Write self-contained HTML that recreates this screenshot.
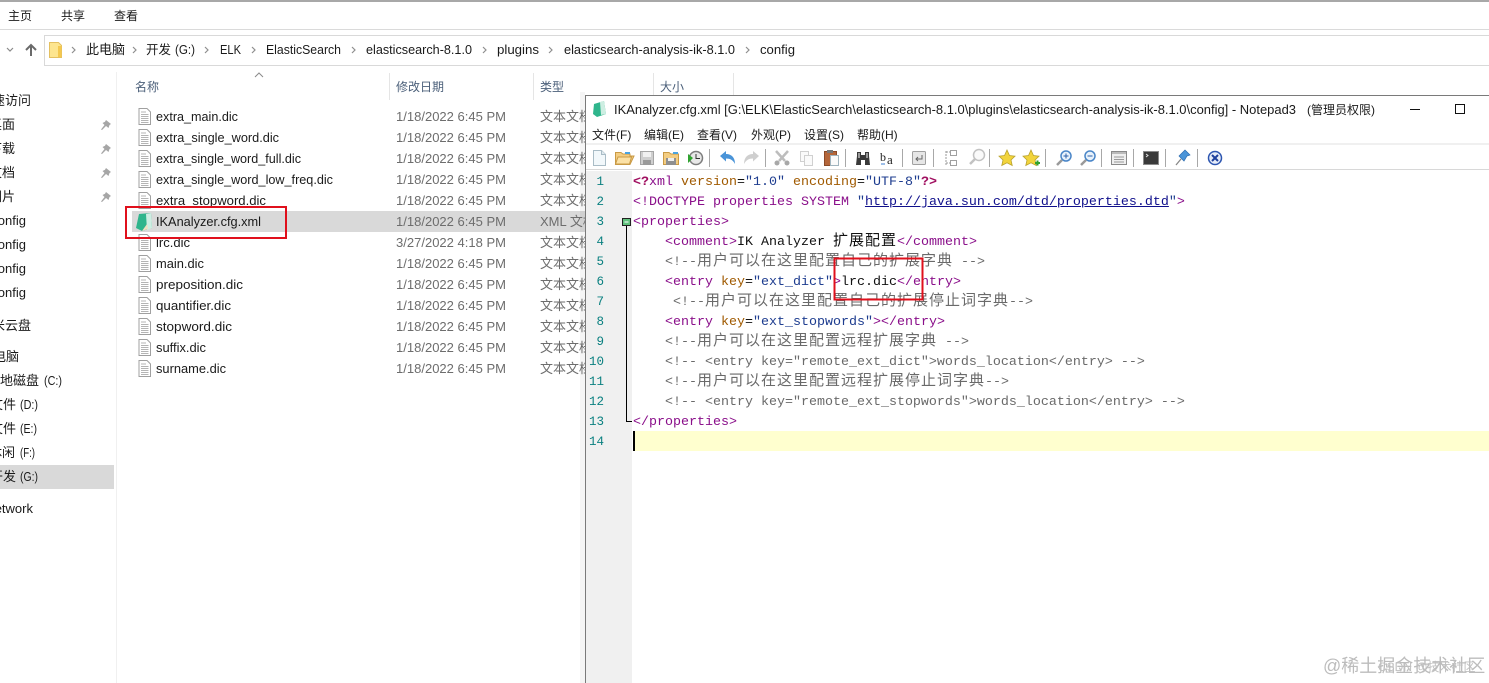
<!DOCTYPE html>
<html lang="zh">
<head>
<meta charset="utf-8">
<title>IKAnalyzer.cfg.xml</title>
<style>
html,body{margin:0;padding:0;width:1489px;height:683px;overflow:hidden;background:#fff}
svg{position:absolute;left:0;top:0}
svg text{font-family:"Liberation Sans","Noto Sans CJK SC",sans-serif;font-size:13px;fill:#1a1a1a}
.d{fill:#6d6d6d}
.h{fill:#4c607a;font-size:12px}
.c{font-size:12px}
#code{position:absolute;left:633px;top:173px;margin:0;font-family:"Liberation Mono",monospace;font-size:13.33px;line-height:20px;color:#111;white-space:pre;z-index:3}
#code div{height:20px;line-height:20px}
#code i{font-family:"Noto Sans CJK SC",sans-serif;font-style:normal;font-size:15px;letter-spacing:1px;line-height:0}
.t{color:#8a0f8a}.k{color:#a05a00}.s{color:#1d3c8f}.m{color:#6a6a6a}.p{color:#a00f60;font-weight:bold}
.u{color:#10108c;text-decoration:underline}
#nums{position:absolute;left:586px;top:172px;width:18px;text-align:right;font-family:"Liberation Mono",monospace;font-size:12.5px;line-height:20px;color:#0a8080;z-index:3}
#nums div{height:20px}
#over{z-index:4}
</style>
</head>
<body>
<svg width="1489" height="683" viewBox="0 0 1489 683" style="z-index:1">
<defs>
<g id="f">
<path d="M1 .5H9L12.5 4V16.5H1Z" fill="#fff" stroke="#a0a0a0"/>
<path d="M3 4H8M3 6.5H10.500M3 8.500H10.500M3 10.500H10.500M3 12.500H10.500M3 14.500H10.500" stroke="#b4b4b4"/>
</g>
<path id="pin" d="M5 0 10 4 8.500 5 7.500 8 5 6 1 10 0 9.500 3.500 5 1.500 3 4 1.800Z" fill="#a6a6a6"/>
</defs>
<rect x="0" y="0" width="1489" height="2" fill="#a8a8a8"/>
<rect x="0" y="29" width="1489" height="1" fill="#dadada"/>
<text class="c" x="8" y="20">主页</text><text class="c" x="61" y="20">共享</text><text class="c" x="114" y="20">查看</text>

<path d="M7 48 10 51 13 48" fill="none" stroke="#8a8a8a" stroke-width="1.200"/>
<path d="M31 56V45M26 50 31 45 36 50" fill="none" stroke="#6a6a6a" stroke-width="2"/>
<rect x="44.500" y="35.500" width="1450" height="30" fill="#fff" stroke="#d9d9d9"/>
<path d="M49.500 42.500H58.500L61.500 45.500V57.500H49.500Z" fill="#fde58f" stroke="#e4c060"/>
<path d="M58 46H61.500V57H58Z" fill="#f4c84f"/>
<g fill="none" stroke="#8f8f8f" stroke-width="1.200">
<path d="M72 47 75 50 72 53M133 47 136 50 133 53M205 47 208 50 205 53M252 47 255 50 252 53M352 47 355 50 352 53M483 47 486 50 483 53M549 47 552 50 549 53M746 47 749 50 746 53"/>
</g>
<text x="86" y="54">此电脑</text>
<text x="146" y="54" style="font-size:12.500px">开发</text><text x="175" y="54" textLength="20" lengthAdjust="spacingAndGlyphs">(G:)</text>
<text x="220" y="54" textLength="21" lengthAdjust="spacingAndGlyphs">ELK</text>
<text x="266" y="54" textLength="75" lengthAdjust="spacingAndGlyphs">ElasticSearch</text>
<text x="366" y="54" textLength="106" lengthAdjust="spacingAndGlyphs">elasticsearch-8.1.0</text>
<text x="497" y="54" textLength="42" lengthAdjust="spacingAndGlyphs">plugins</text>
<text x="564" y="54" textLength="171" lengthAdjust="spacingAndGlyphs">elasticsearch-analysis-ik-8.1.0</text>
<text x="760" y="54" textLength="35" lengthAdjust="spacingAndGlyphs">config</text>

<rect x="116" y="72" width="1" height="611" fill="#f0f0f0"/>
<path d="M255 77 259 73 263 77" fill="none" stroke="#8a8a8a"/>
<rect x="389" y="73" width="1" height="27" fill="#e5e5e5"/><rect x="533" y="73" width="1" height="27" fill="#e5e5e5"/><rect x="653" y="73" width="1" height="27" fill="#e5e5e5"/><rect x="733" y="73" width="1" height="27" fill="#e5e5e5"/>
<text class="h" x="135" y="91">名称</text><text class="h" x="396" y="91">修改日期</text><text class="h" x="540" y="91">类型</text><text class="h" x="660" y="91">大小</text>

<!-- sidebar -->
<rect x="0" y="465" width="114" height="24" fill="#d9d9d9"/>
<text text-anchor="end" x="31" y="105">快速访问</text>
<text text-anchor="end" x="15" y="129">桌面</text>
<text text-anchor="end" x="15" y="153">下载</text>
<text text-anchor="end" x="15" y="177">文档</text>
<text text-anchor="end" x="15" y="201">图片</text>
<text text-anchor="end" x="26" y="225">config</text>
<text text-anchor="end" x="26" y="249">config</text>
<text text-anchor="end" x="26" y="273">config</text>
<text text-anchor="end" x="26" y="297">config</text>
<text text-anchor="end" x="31" y="330">小米云盘</text>
<text text-anchor="end" x="19" y="361">此电脑</text>
<text text-anchor="end" x="39" y="385">本地磁盘</text><text x="44" y="385" textLength="18" lengthAdjust="spacingAndGlyphs">(C:)</text>
<text text-anchor="end" x="16" y="409">文件</text><text x="20" y="409" textLength="18" lengthAdjust="spacingAndGlyphs">(D:)</text>
<text text-anchor="end" x="16" y="433">文件</text><text x="20" y="433" textLength="17" lengthAdjust="spacingAndGlyphs">(E:)</text>
<text text-anchor="end" x="15" y="457">休闲</text><text x="20" y="457" textLength="15" lengthAdjust="spacingAndGlyphs">(F:)</text>
<text text-anchor="end" x="16" y="481">开发</text><text x="20" y="481" textLength="18" lengthAdjust="spacingAndGlyphs">(G:)</text>
<text text-anchor="end" x="33" y="513">Network</text>
<use href="#pin" x="101" y="120"/><use href="#pin" x="101" y="144"/><use href="#pin" x="101" y="168"/><use href="#pin" x="101" y="192"/>

<!-- rows -->
<rect x="132" y="211" width="460" height="21" fill="#d9d9d9"/>
<use href="#f" x="138" y="108"/><use href="#f" x="138" y="129"/><use href="#f" x="138" y="150"/><use href="#f" x="138" y="171"/><use href="#f" x="138" y="192"/>
<use href="#f" x="138" y="234"/><use href="#f" x="138" y="255"/><use href="#f" x="138" y="276"/><use href="#f" x="138" y="297"/><use href="#f" x="138" y="318"/><use href="#f" x="138" y="339"/><use href="#f" x="138" y="360"/>
<path d="M139 214 151 213 152 228 142 231 136 228Z" fill="#2fb58c"/>
<path d="M146 214 151 213 152 228 147 230Z" fill="#cdeee2"/>
<path d="M142 231 148 229 147 224Z" fill="#efe0c0"/>
<g>
<text x="156" y="121" textLength="82" lengthAdjust="spacingAndGlyphs">extra_main.dic</text>
<text x="156" y="142" textLength="123" lengthAdjust="spacingAndGlyphs">extra_single_word.dic</text>
<text x="156" y="163" textLength="145" lengthAdjust="spacingAndGlyphs">extra_single_word_full.dic</text>
<text x="156" y="184" textLength="177" lengthAdjust="spacingAndGlyphs">extra_single_word_low_freq.dic</text>
<text x="156" y="205" textLength="110" lengthAdjust="spacingAndGlyphs">extra_stopword.dic</text>
<text x="156" y="226" textLength="105" lengthAdjust="spacingAndGlyphs">IKAnalyzer.cfg.xml</text>
<text x="156" y="247" textLength="34" lengthAdjust="spacingAndGlyphs">lrc.dic</text>
<text x="156" y="268" textLength="48" lengthAdjust="spacingAndGlyphs">main.dic</text>
<text x="156" y="289" textLength="87" lengthAdjust="spacingAndGlyphs">preposition.dic</text>
<text x="156" y="310" textLength="75" lengthAdjust="spacingAndGlyphs">quantifier.dic</text>
<text x="156" y="331" textLength="76" lengthAdjust="spacingAndGlyphs">stopword.dic</text>
<text x="156" y="352" textLength="50" lengthAdjust="spacingAndGlyphs">suffix.dic</text>
<text x="156" y="373" textLength="70" lengthAdjust="spacingAndGlyphs">surname.dic</text>
</g>
<g>
<text class="d" x="396" y="121" textLength="110" lengthAdjust="spacingAndGlyphs">1/18/2022 6:45 PM</text>
<text class="d" x="396" y="142" textLength="110" lengthAdjust="spacingAndGlyphs">1/18/2022 6:45 PM</text>
<text class="d" x="396" y="163" textLength="110" lengthAdjust="spacingAndGlyphs">1/18/2022 6:45 PM</text>
<text class="d" x="396" y="184" textLength="110" lengthAdjust="spacingAndGlyphs">1/18/2022 6:45 PM</text>
<text class="d" x="396" y="205" textLength="110" lengthAdjust="spacingAndGlyphs">1/18/2022 6:45 PM</text>
<text class="d" x="396" y="226" textLength="110" lengthAdjust="spacingAndGlyphs">1/18/2022 6:45 PM</text>
<text class="d" x="396" y="247" textLength="110" lengthAdjust="spacingAndGlyphs">3/27/2022 4:18 PM</text>
<text class="d" x="396" y="268" textLength="110" lengthAdjust="spacingAndGlyphs">1/18/2022 6:45 PM</text>
<text class="d" x="396" y="289" textLength="110" lengthAdjust="spacingAndGlyphs">1/18/2022 6:45 PM</text>
<text class="d" x="396" y="310" textLength="110" lengthAdjust="spacingAndGlyphs">1/18/2022 6:45 PM</text>
<text class="d" x="396" y="331" textLength="110" lengthAdjust="spacingAndGlyphs">1/18/2022 6:45 PM</text>
<text class="d" x="396" y="352" textLength="110" lengthAdjust="spacingAndGlyphs">1/18/2022 6:45 PM</text>
<text class="d" x="396" y="373" textLength="110" lengthAdjust="spacingAndGlyphs">1/18/2022 6:45 PM</text>
</g>
<g>
<text class="d" x="540" y="121">文本文档</text><text class="d" x="540" y="142">文本文档</text><text class="d" x="540" y="163">文本文档</text><text class="d" x="540" y="184">文本文档</text><text class="d" x="540" y="205">文本文档</text><text class="d" x="540" y="226">XML 文档</text><text class="d" x="540" y="247">文本文档</text><text class="d" x="540" y="268">文本文档</text><text class="d" x="540" y="289">文本文档</text><text class="d" x="540" y="310">文本文档</text><text class="d" x="540" y="331">文本文档</text><text class="d" x="540" y="352">文本文档</text><text class="d" x="540" y="373">文本文档</text>
</g>
<rect x="126" y="207" width="160" height="31" fill="none" stroke="#e0101c" stroke-width="2"/>

<!-- notepad window -->
<rect x="580" y="92" width="5" height="591" fill="#000" opacity=".04"/>
<rect x="585.500" y="95.500" width="920" height="600" fill="#fff" stroke="#7a7a7a"/>
<path d="M594 104 604 101 606 114 597 117 593 114Z" fill="#2fb58c"/>
<path d="M600 102 604 101 606 114 601 115Z" fill="#cdeee2"/>
<text x="614" y="114" textLength="682" lengthAdjust="spacingAndGlyphs">IKAnalyzer.cfg.xml [G:\ELK\ElasticSearch\elasticsearch-8.1.0\plugins\elasticsearch-analysis-ik-8.1.0\config] - Notepad3</text>
<text class="c" x="1307" y="114">(管理员权限)</text>
<rect x="1410" y="109" width="10" height="1" fill="#111"/>
<rect x="1455.500" y="104.500" width="9" height="9" fill="none" stroke="#111"/>
<g>
<text class="c" x="592" y="139">文件(F)</text><text class="c" x="644" y="139">编辑(E)</text><text class="c" x="697" y="139">查看(V)</text><text class="c" x="751" y="139">外观(P)</text><text class="c" x="804" y="139">设置(S)</text><text class="c" x="857" y="139">帮助(H)</text>
</g>
<rect x="586" y="143" width="903" height="2" fill="#f0f0f0"/>
<rect x="586" y="169" width="903" height="1" fill="#d8d8d8"/>

<!-- toolbar separators -->
<g fill="#a8a8a8">
<rect x="709" y="149" width="1" height="18"/><rect x="765" y="149" width="1" height="18"/><rect x="845" y="149" width="1" height="18"/><rect x="902" y="149" width="1" height="18"/><rect x="933" y="149" width="1" height="18"/><rect x="989" y="149" width="1" height="18"/><rect x="1045" y="149" width="1" height="18"/><rect x="1101" y="149" width="1" height="18"/><rect x="1133" y="149" width="1" height="18"/><rect x="1165" y="149" width="1" height="18"/><rect x="1197" y="149" width="1" height="18"/>
</g>
<!-- new -->
<path d="M593.500 150.500H601.500L605.500 154.500V165.500H593.500Z" fill="#f2f8fb" stroke="#a9bcc6"/><path d="M601.500 150.500V154.500H605.500" fill="#dfe9ee" stroke="#a9bcc6"/>
<!-- open -->
<path d="M615.500 152.500H621L623 154H630V156H634L630 164.500H615.500Z" fill="#f3cd82" stroke="#c99a45"/><path d="M618 157H631.500L629.500 164H615.500Z" fill="#fbe1a6" stroke="#c99a45"/><rect x="625" y="152" width="5" height="2" fill="#4aa3df"/>
<!-- save -->
<rect x="640.500" y="151.500" width="13" height="13" fill="#cfcfcf" stroke="#a6a6a6"/><rect x="643" y="152" width="8" height="5" fill="#f1f1f1"/><rect x="643" y="160" width="8" height="5" fill="#9a9a9a"/>
<!-- save as folder -->
<path d="M663.500 152.500H669L671 154H678.500V164.500H663.500Z" fill="#f3cd82" stroke="#c99a45"/><rect x="673" y="152" width="5" height="2" fill="#4aa3df"/><rect x="666" y="158" width="10" height="7" fill="#8f8f8f"/><rect x="668" y="158" width="6" height="3" fill="#eee"/>
<!-- history -->
<circle cx="696" cy="158" r="6.500" fill="#e8e8e8" stroke="#7d7d7d" stroke-width="1.500"/><path d="M696 154V158.500H700" fill="none" stroke="#333"/><path d="M688 154 693 158 688 163Z" fill="#2fa32f"/>
<!-- undo -->
<path d="M720 156 726 151V154C732 154 735 158 735 164 733 160 730 158.500 726 158.500V161.500Z" fill="#4a94d8"/>
<!-- redo -->
<path d="M759 156 753 151V154C747 154 744 158 744 164 746 160 749 158.500 753 158.500V161.500Z" fill="#cfcfcf"/>
<!-- cut -->
<path d="M776 151 785 161M788 151 779 161" stroke="#bdbdbd" stroke-width="2.500"/><circle cx="777" cy="163" r="2.500" fill="#a8a8a8"/><circle cx="787" cy="163" r="2.500" fill="#a8a8a8"/>
<!-- copy -->
<rect x="800.500" y="151.500" width="8" height="10" fill="#fafafa" stroke="#d0d0d0"/><rect x="804.500" y="155.500" width="8" height="10" fill="#fafafa" stroke="#d0d0d0"/>
<!-- paste -->
<rect x="824.500" y="151.500" width="12" height="14" fill="#b4663a" stroke="#8a4a28"/><rect x="827" y="150" width="6" height="3" fill="#777"/><rect x="830.500" y="155.500" width="8" height="10" fill="#fafafa" stroke="#a0b4be"/>
<!-- binoculars -->
<path d="M857 152H861V155H865V152H869V156L870 165H865V160H861V165H856L857 156Z" fill="#3a3a3a"/><rect x="858" y="153" width="2" height="5" fill="#9a9a9a"/><rect x="866" y="153" width="2" height="5" fill="#9a9a9a"/>
<!-- ba -->
<text x="880" y="161" style="font-family:'Liberation Serif',serif;font-size:12px;fill:#222">b</text><text x="887" y="164" style="font-family:'Liberation Serif',serif;font-size:13px;fill:#222">a</text><path d="M881 164H885" stroke="#3c7fd0"/>
<!-- wrap -->
<rect x="912.500" y="151.500" width="13" height="13" rx="1" fill="#e6e6e6" stroke="#a0a0a0"/><path d="M922 155V159H916M918 157 916 159 918 161" fill="none" stroke="#666"/>
<!-- fold -->
<path d="M946 151V165M946 152H950M946 163H950" stroke="#9a9a9a" stroke-dasharray="2 1" fill="none"/><rect x="950.500" y="150.500" width="6" height="5" fill="#fff" stroke="#a0a0a0"/><rect x="950.500" y="160.500" width="6" height="5" fill="#fff" stroke="#a0a0a0"/>
<!-- search grey -->
<circle cx="979" cy="155" r="5.500" fill="#fafafa" stroke="#c2c2c2" stroke-width="1.500"/><path d="M975 159 970 164" stroke="#c2c2c2" stroke-width="2.500"/>
<!-- stars -->
<path id="st" d="M1007 150 1009.500 155.500 1015 156.200 1011 160 1012.200 165.500 1007 162.800 1001.800 165.500 1003 160 999 156.200 1004.500 155.500Z" fill="#f2d43c" stroke="#b9a22c" stroke-width=".8"/>
<path d="M1031 150 1033.500 155.500 1039 156.200 1035 160 1036.200 165.500 1031 162.800 1025.800 165.500 1027 160 1023 156.200 1028.500 155.500Z" fill="#f2d43c" stroke="#b9a22c" stroke-width=".8"/>
<path d="M1035 163H1040M1037.500 160.500V165.500" stroke="#2fa32f" stroke-width="2"/>
<!-- zoom -->
<circle cx="1066" cy="156" r="5" fill="#e8f2fb" stroke="#4a86c8" stroke-width="1.500"/><path d="M1062 160 1057 165" stroke="#9a9a9a" stroke-width="2.500"/><path d="M1063.500 156H1068.500M1066 153.500V158.500" stroke="#2c5fa8"/>
<circle cx="1090" cy="156" r="5" fill="#e8f2fb" stroke="#4a86c8" stroke-width="1.500"/><path d="M1086 160 1081 165" stroke="#9a9a9a" stroke-width="2.500"/><path d="M1087.500 156H1092.500" stroke="#2c5fa8"/>
<!-- panel -->
<rect x="1111.500" y="151.500" width="15" height="13" fill="#efefef" stroke="#8a8a8a"/><rect x="1112" y="152" width="14" height="2" fill="#bbb"/><path d="M1114 157H1124M1114 159.500H1124M1114 162H1124" stroke="#999"/>
<!-- console -->
<rect x="1143.500" y="151.500" width="15" height="13" fill="#3a3a3a" stroke="#8a8a8a"/><path d="M1146 154 1148 155.500 1146 157" fill="none" stroke="#ddd"/>
<!-- pin -->
<path d="M1185 150 1190 155 1187 156 1184 161 1179 156 1182 153Z" fill="#4a94d8" stroke="#2c6cb0" stroke-width=".7"/><path d="M1181 159 1176 165" stroke="#888" stroke-width="1.300"/>
<!-- close -->
<circle cx="1215" cy="158" r="6.500" fill="#e6ecf8" stroke="#2c55b0" stroke-width="1.500"/><path d="M1212 155 1218 161M1218 155 1212 161" stroke="#1d3f9c" stroke-width="2"/>

<!-- gutter -->
<rect x="586" y="171" width="46" height="512" fill="#f0f0f0"/>
<rect x="633" y="431" width="856" height="20" fill="#ffffcf"/>
<rect x="633" y="431" width="2" height="20" fill="#000"/>
<rect x="622.500" y="218.500" width="8" height="7" fill="#5fc17c" stroke="#222"/>
<path d="M624.500 222H628.500" stroke="#fff"/>
<path d="M626.500 226V421.500H632" fill="none" stroke="#000"/>
</svg>

<div id="nums"><div>1</div><div>2</div><div>3</div><div>4</div><div>5</div><div>6</div><div>7</div><div>8</div><div>9</div><div>10</div><div>11</div><div>12</div><div>13</div><div>14</div></div>

<pre id="code"><div><span class="p">&lt;?</span><span class="t">xml</span> <span class="k">version</span>=<span class="s">"1.0"</span> <span class="k">encoding</span>=<span class="s">"UTF-8"</span><span class="p">?&gt;</span></div><div><span class="t">&lt;!DOCTYPE properties SYSTEM</span> <span class="s">"</span><span class="u">http://java.sun.com/dtd/properties.dtd</span><span class="s">"</span><span class="t">&gt;</span></div><div><span class="t">&lt;properties&gt;</span></div><div>    <span class="t">&lt;comment&gt;</span>IK Analyzer <i>扩展配置</i><span class="t">&lt;/comment&gt;</span></div><div class="m">    &lt;!--<i>用户可以在这里配置自己的扩展字典</i> --&gt;</div><div>    <span class="t">&lt;entry</span> <span class="k">key</span>=<span class="s">"ext_dict"</span><span class="t">&gt;</span>lrc.dic<span class="t">&lt;/entry&gt;</span></div><div class="m">     &lt;!--<i>用户可以在这里配置自己的扩展停止词字典</i>--&gt;</div><div>    <span class="t">&lt;entry</span> <span class="k">key</span>=<span class="s">"ext_stopwords"</span><span class="t">&gt;&lt;/entry&gt;</span></div><div class="m">    &lt;!--<i>用户可以在这里配置远程扩展字典</i> --&gt;</div><div class="m">    &lt;!-- &lt;entry key="remote_ext_dict"&gt;words_location&lt;/entry&gt; --&gt;</div><div class="m">    &lt;!--<i>用户可以在这里配置远程扩展停止词字典</i>--&gt;</div><div class="m">    &lt;!-- &lt;entry key="remote_ext_stopwords"&gt;words_location&lt;/entry&gt; --&gt;</div><div><span class="t">&lt;/properties&gt;</span></div></pre>

<svg id="over" width="1489" height="683" viewBox="0 0 1489 683" style="z-index:4">
<rect x="834.500" y="258.500" width="88" height="41" fill="none" stroke="#e0101c" stroke-width="2"/>
<text x="1323" y="672" style="font-size:18px;fill:#bcbcbc">@稀土掘金技术社区</text>
<text x="1378" y="671" style="font-size:12px;fill:#c0c0c0">CSDN @技术社区</text>
</svg>
</body>
</html>
